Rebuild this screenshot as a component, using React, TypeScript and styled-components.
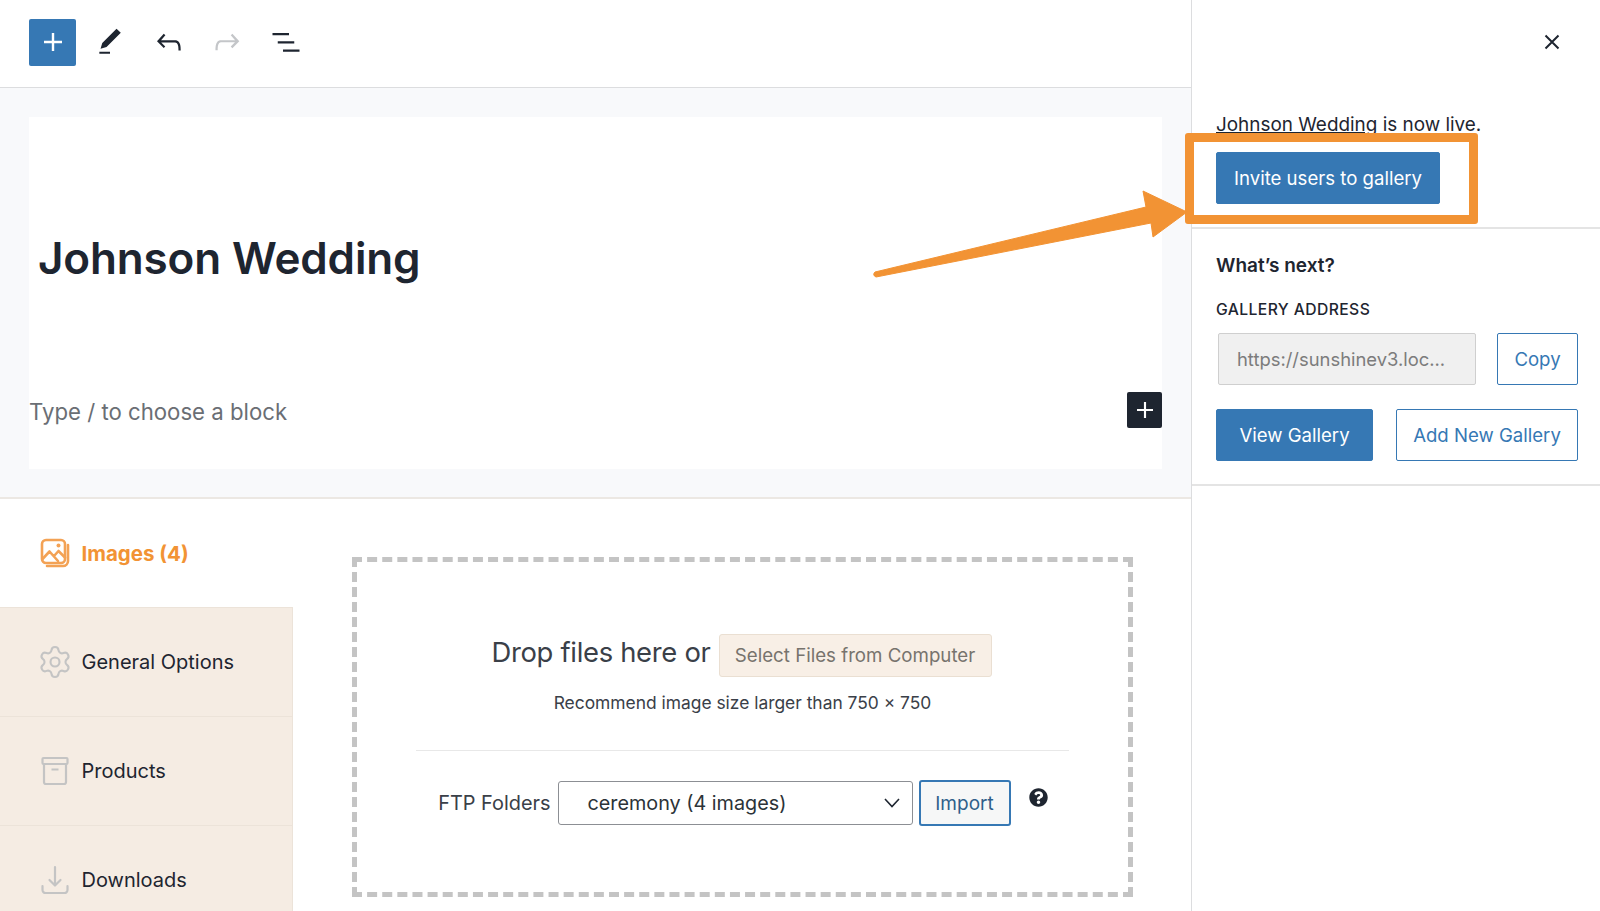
import React, { FC } from 'react'
import styled, { createGlobalStyle } from 'styled-components'
import { Settings } from 'lucide-react'
import { FaQuestionCircle } from 'react-icons/fa'

const blue = '#3678b4'
const ink = '#1e2530'
const orange = '#f29334'

const GlobalStyle = createGlobalStyle`
  html, body {
    margin: 0;
    padding: 0;
    background: #fff;
    overflow: hidden;
  }
  * {
    box-sizing: border-box;
  }
  body {
    font-family: Inter, "Liberation Sans", sans-serif;
    color: ${ink};
  }
`

const Icon: FC<{ d: string; size?: number }> = ({ d, size = 36 }) => (
  <svg width={size} height={size} viewBox="0 0 24 24" fill="currentColor">
    <path d={d} />
  </svg>
)

const paths = {
  plus: 'M18 11.2h-5.2V6h-1.6v5.2H6v1.6h5.2V18h1.6v-5.2H18z',
  pencil: 'M20.1 5.1L16.9 2 6.2 12.7l-1.3 4.4 4.5-1.3L20.1 5.1zM4 20.8h8v-1.5H4v1.5z',
  undo: 'M18.3 11.7c-.6-.6-1.4-.9-2.3-.9H6.7l2.9-3.3-1.1-1-4.5 5L8.5 16l1-1-2.7-2.7H16c.5 0 .9.2 1.3.5 1 1 1 3.4 1 4.5v.3h1.5v-.2c0-1.5 0-4.3-1.5-5.7z',
  redo: 'M15.6 6.5l-1.1 1 2.9 3.3H8c-.9 0-1.7.3-2.3.9-1.4 1.5-1.4 4.2-1.4 5.6v.2h1.5v-.3c0-1.1 0-3.5 1-4.5.3-.3.7-.5 1.3-.5h9.2L14.5 15l1.1 1.1 4.6-4.6-4.6-5z',
  list: 'M3 6h11v1.5H3V6zm3.5 5.5h11V13h-11v-1.5zM21 17H10v1.5h11V17z',
}

const CloseIcon = () => (
  <svg width="24" height="24" viewBox="0 0 24 24" fill="none" stroke={ink} strokeWidth="2">
    <path d="M5.5 5.5l13 13M18.5 5.5l-13 13" />
  </svg>
)

const ImagesIcon = () => (
  <svg width="30" height="30" viewBox="0 0 30 30" fill="none" stroke="#f3a255" strokeWidth="2.6" strokeLinejoin="round" strokeLinecap="round">
    <rect x="2" y="2" width="23" height="23" rx="4" />
    <path d="M28 7v16a5 5 0 0 1-5 5H7" />
    <path d="M2.5 21l7-7.5 8.5 9.5M14 18l4.5-5 6.5 6.5" />
    <circle cx="18.5" cy="7.5" r="2" fill="#f3a255" stroke="none" />
  </svg>
)

const ArchiveIcon = () => (
  <svg width="30" height="30" viewBox="0 0 30 30" fill="none" stroke="#c4c4c4" strokeWidth="2.2">
    <rect x="2.5" y="2" width="25" height="6" rx="1" />
    <path d="M4 8v18a2 2 0 0 0 2 2h18a2 2 0 0 0 2-2V8M11.5 13.5h7" />
  </svg>
)

const DownloadIcon = () => (
  <svg width="30" height="30" viewBox="0 0 30 30" fill="none" stroke="#c4c4c4" strokeWidth="2.2" strokeLinecap="round" strokeLinejoin="round">
    <path d="M15 2v18M9.5 15l5.5 5.5 5.5-5.5M2.5 21v4a3 3 0 0 0 3 3h19a3 3 0 0 0 3-3v-4" />
  </svg>
)

const App: FC = () => (
  <Page>
    <GlobalStyle />
    <Main>
      <Toolbar>
        <Inserter>
          <Icon d={paths.plus} />
        </Inserter>
        <ToolButton>
          <Icon d={paths.pencil} size={32} />
        </ToolButton>
        <ToolButton>
          <Icon d={paths.undo} />
        </ToolButton>
        <ToolButton $disabled>
          <Icon d={paths.redo} />
        </ToolButton>
        <ToolButton>
          <Icon d={paths.list} />
        </ToolButton>
      </Toolbar>
      <Canvas>
        <Card>
          <Title>Johnson Wedding</Title>
          <BlockRow>
            <Placeholder>Type / to choose a block</Placeholder>
            <BlockAdd>
              <Icon d={paths.plus} size={32} />
            </BlockAdd>
          </BlockRow>
        </Card>
      </Canvas>
      <MetaBox>
        <Tabs>
          <ActiveTab>
            <TabIcon>
              <ImagesIcon />
            </TabIcon>
            Images (4)
          </ActiveTab>
          <Tab>
            <TabIcon>
              <Settings size={36} strokeWidth={1.4} color="#c4c4c4" />
            </TabIcon>
            General Options
          </Tab>
          <Tab>
            <TabIcon>
              <ArchiveIcon />
            </TabIcon>
            Products
          </Tab>
          <Tab>
            <TabIcon>
              <DownloadIcon />
            </TabIcon>
            Downloads
          </Tab>
        </Tabs>
        <DropZone>
          <DropRow>
            <DropText>Drop files here or</DropText>
            <SelectFiles>Select Files from Computer</SelectFiles>
          </DropRow>
          <Hint>Recommend image size larger than 750 × 750</Hint>
          <Divider />
          <FtpRow>
            <FtpLabel>FTP Folders</FtpLabel>
            <FolderSelect>
              ceremony (4 images)
              <svg width="18" height="18" viewBox="0 0 18 18" fill="none" stroke={ink} strokeWidth="1.6">
                <path d="M2 5L9 12.5 16 5" />
              </svg>
            </FolderSelect>
            <ImportButton>Import</ImportButton>
            <Help>
              <FaQuestionCircle size={19} color={ink} />
            </Help>
          </FtpRow>
        </DropZone>
      </MetaBox>
    </Main>
    <Sidebar>
      <SideHeader>
        <CloseIcon />
      </SideHeader>
      <LiveSection>
        <LiveText>
          <u>Johnson Wedding</u> is now live.
        </LiveText>
        <Button $primary $width={224}>
          Invite users to gallery
        </Button>
      </LiveSection>
      <NextSection>
        <NextTitle>What’s next?</NextTitle>
        <AddressLabel>GALLERY ADDRESS</AddressLabel>
        <AddressRow>
          <AddressInput readOnly value="https://sunshinev3.loc..." />
          <Button $width={81}>Copy</Button>
        </AddressRow>
        <ActionRow>
          <Button $primary $width={157}>
            View Gallery
          </Button>
          <Button $width={182}>Add New Gallery</Button>
        </ActionRow>
      </NextSection>
    </Sidebar>
    <Highlight />
    <Arrow width="330" height="100" viewBox="0 0 330 100">
      <path
        d="M5 87 L276 22 L273 6 L317 27 L283 52 L281 38 L6 92 Q2 90 5 87 Z"
        fill={orange}
        stroke={orange}
        strokeLinejoin="round"
      />
    </Arrow>
  </Page>
)

export default App

const Page = styled.div`
  position: relative;
  display: flex;
  width: 1600px;
  height: 911px;
  overflow: hidden;
`
const Main = styled.main`
  display: flex;
  flex-direction: column;
  width: 1192px;
  border-right: 1px solid #dcdddf;
`
const Toolbar = styled.div`
  display: flex;
  align-items: center;
  flex: none;
  height: 88px;
  padding: 0 0 3px 29px;
  border-bottom: 1px solid #dcdddf;
`
const Inserter = styled.div`
  display: flex;
  align-items: center;
  justify-content: center;
  width: 47px;
  height: 47px;
  margin-right: 5px;
  border-radius: 2px;
  background: ${blue};
  color: #fff;
`
const ToolButton = styled.div<{ $disabled?: boolean }>`
  display: flex;
  align-items: center;
  justify-content: center;
  width: 58.5px;
  height: 47px;
  color: ${(p) => (p.$disabled ? '#c4c6c9' : ink)};
`
const Canvas = styled.div`
  flex: none;
  height: 411px;
  padding: 29px 29px 28px;
  background: #f8f9fb;
  border-bottom: 2px solid #ece8e3;
`
const Card = styled.div`
  display: flex;
  flex-direction: column;
  height: 352px;
  background: #fff;
`
const Title = styled.h1`
  margin: 112px 0 0 9px;
  font-size: 44px;
  line-height: 58px;
  font-weight: 600;
  letter-spacing: -0.15px;
`
const BlockRow = styled.div`
  display: flex;
  align-items: center;
  justify-content: space-between;
  margin-top: 103px;
`
const Placeholder = styled.div`
  padding-top: 4px;
  font-size: 22.2px;
  line-height: 36px;
  color: #6a6e74;
`
const BlockAdd = styled.div`
  display: flex;
  align-items: center;
  justify-content: center;
  width: 35px;
  height: 36px;
  border-radius: 2px;
  background: ${ink};
  color: #fff;
`
const MetaBox = styled.div`
  display: flex;
  flex: 1;
  min-height: 0;
`
const Tabs = styled.div`
  display: flex;
  flex-direction: column;
  flex: none;
  width: 293px;
`
const Tab = styled.div`
  display: flex;
  align-items: center;
  flex: none;
  height: 109px;
  padding-left: 40px;
  font-size: 20px;
  background: #f5ece3;
  border-right: 1px solid #ece3d9;
  border-top: 1px solid #ece3d9;
`
const ActiveTab = styled(Tab)`
  height: 108px;
  font-size: 20.5px;
  font-weight: 700;
  color: ${orange};
  background: #fff;
  border: 0;
`
const TabIcon = styled.span`
  display: flex;
  align-items: center;
  justify-content: center;
  width: 30px;
  height: 36px;
  margin-right: 11.5px;
  & > svg {
    flex: none;
  }
`
const DropZone = styled.div`
  display: flex;
  flex-direction: column;
  align-items: center;
  flex: none;
  width: 781px;
  height: 340px;
  margin: 58px 0 0 59px;
  padding-top: 71px;
  border: 5px dashed #c4c4c4;
`
const DropRow = styled.div`
  display: flex;
  align-items: center;
  gap: 8px;
  margin-left: -2px;
`
const DropText = styled.span`
  padding-bottom: 6px;
  font-size: 27.4px;
  letter-spacing: -0.3px;
  color: #3a4048;
`
const SelectFiles = styled.div`
  display: flex;
  align-items: center;
  justify-content: center;
  width: 273px;
  height: 43px;
  margin-top: 1px;
  border: 1px solid #eadfd2;
  border-radius: 3px;
  background: #f8efe6;
  font-size: 18.7px;
  color: #77736d;
`
const Hint = styled.div`
  margin-top: 15px;
  font-size: 17.4px;
  line-height: 22px;
  color: #3a4048;
`
const Divider = styled.div`
  align-self: stretch;
  height: 1px;
  margin: 36px 59px 0;
  background: #e8e8e8;
`
const FtpRow = styled.div`
  display: flex;
  align-items: center;
  margin-top: 29px;
`
const FtpLabel = styled.span`
  width: 120px;
  padding-right: 7px;
  text-align: right;
  font-size: 19.9px;
  color: #3a4048;
`
const FolderSelect = styled.div`
  display: flex;
  align-items: center;
  justify-content: space-between;
  width: 355px;
  height: 44px;
  padding: 0 11px 0 29px;
  border: 1px solid #8c8f94;
  border-radius: 3px;
  font-size: 19.8px;
  color: #2c3338;
`
const ImportButton = styled.div`
  display: flex;
  align-items: center;
  justify-content: center;
  width: 92px;
  height: 46px;
  margin-left: 6px;
  border: 2px solid ${blue};
  border-radius: 3px;
  background: #f6f7f7;
  font-size: 19px;
  color: #2f5f8a;
`
const Help = styled.span`
  display: flex;
  margin: -11px 0 0 18px;
`
const Sidebar = styled.aside`
  display: flex;
  flex-direction: column;
  flex: 1;
`
const SideHeader = styled.div`
  display: flex;
  align-items: center;
  justify-content: flex-end;
  height: 86px;
  padding: 0 36px 2px 0;
`
const LiveSection = styled.section`
  height: 143px;
  padding: 26px 22px 0 24px;
  border-bottom: 2px solid #e4e4e4;
`
const LiveText = styled.div`
  margin-bottom: 14px;
  font-size: 18.9px;
  line-height: 26px;
`
const Button = styled.div<{ $primary?: boolean; $width: number }>`
  display: flex;
  align-items: center;
  justify-content: center;
  flex: none;
  width: ${(p) => p.$width}px;
  height: 52px;
  border: 1px solid ${blue};
  border-radius: 2px;
  background: ${(p) => (p.$primary ? blue : '#fff')};
  color: ${(p) => (p.$primary ? '#fff' : blue)};
  font-size: 18.6px;
`
const NextSection = styled.section`
  height: 257px;
  padding: 24px 22px 0 24px;
  border-bottom: 2px solid #e4e4e4;
`
const NextTitle = styled.div`
  font-size: 19px;
  line-height: 26px;
  font-weight: 600;
`
const AddressLabel = styled.div`
  margin-top: 22px;
  font-size: 15.7px;
  line-height: 18px;
  font-weight: 500;
  letter-spacing: 0.4px;
`
const AddressRow = styled.div`
  display: flex;
  justify-content: space-between;
  margin-top: 14px;
  padding-left: 2px;
`
const AddressInput = styled.input`
  width: 258px;
  height: 52px;
  padding: 0 18px;
  border: 1px solid #cfcfcf;
  border-radius: 2px;
  background: #f0f0f0;
  font-family: inherit;
  font-size: 18.4px;
  color: #7c7c7c;
  outline: none;
`
const ActionRow = styled.div`
  display: flex;
  justify-content: space-between;
  margin-top: 24px;
`
const Highlight = styled.div`
  position: absolute;
  left: 1185px;
  top: 133px;
  width: 293px;
  height: 91px;
  border: 9px solid ${orange};
  border-radius: 3px;
`
const Arrow = styled.svg`
  position: absolute;
  left: 870px;
  top: 185px;
`
